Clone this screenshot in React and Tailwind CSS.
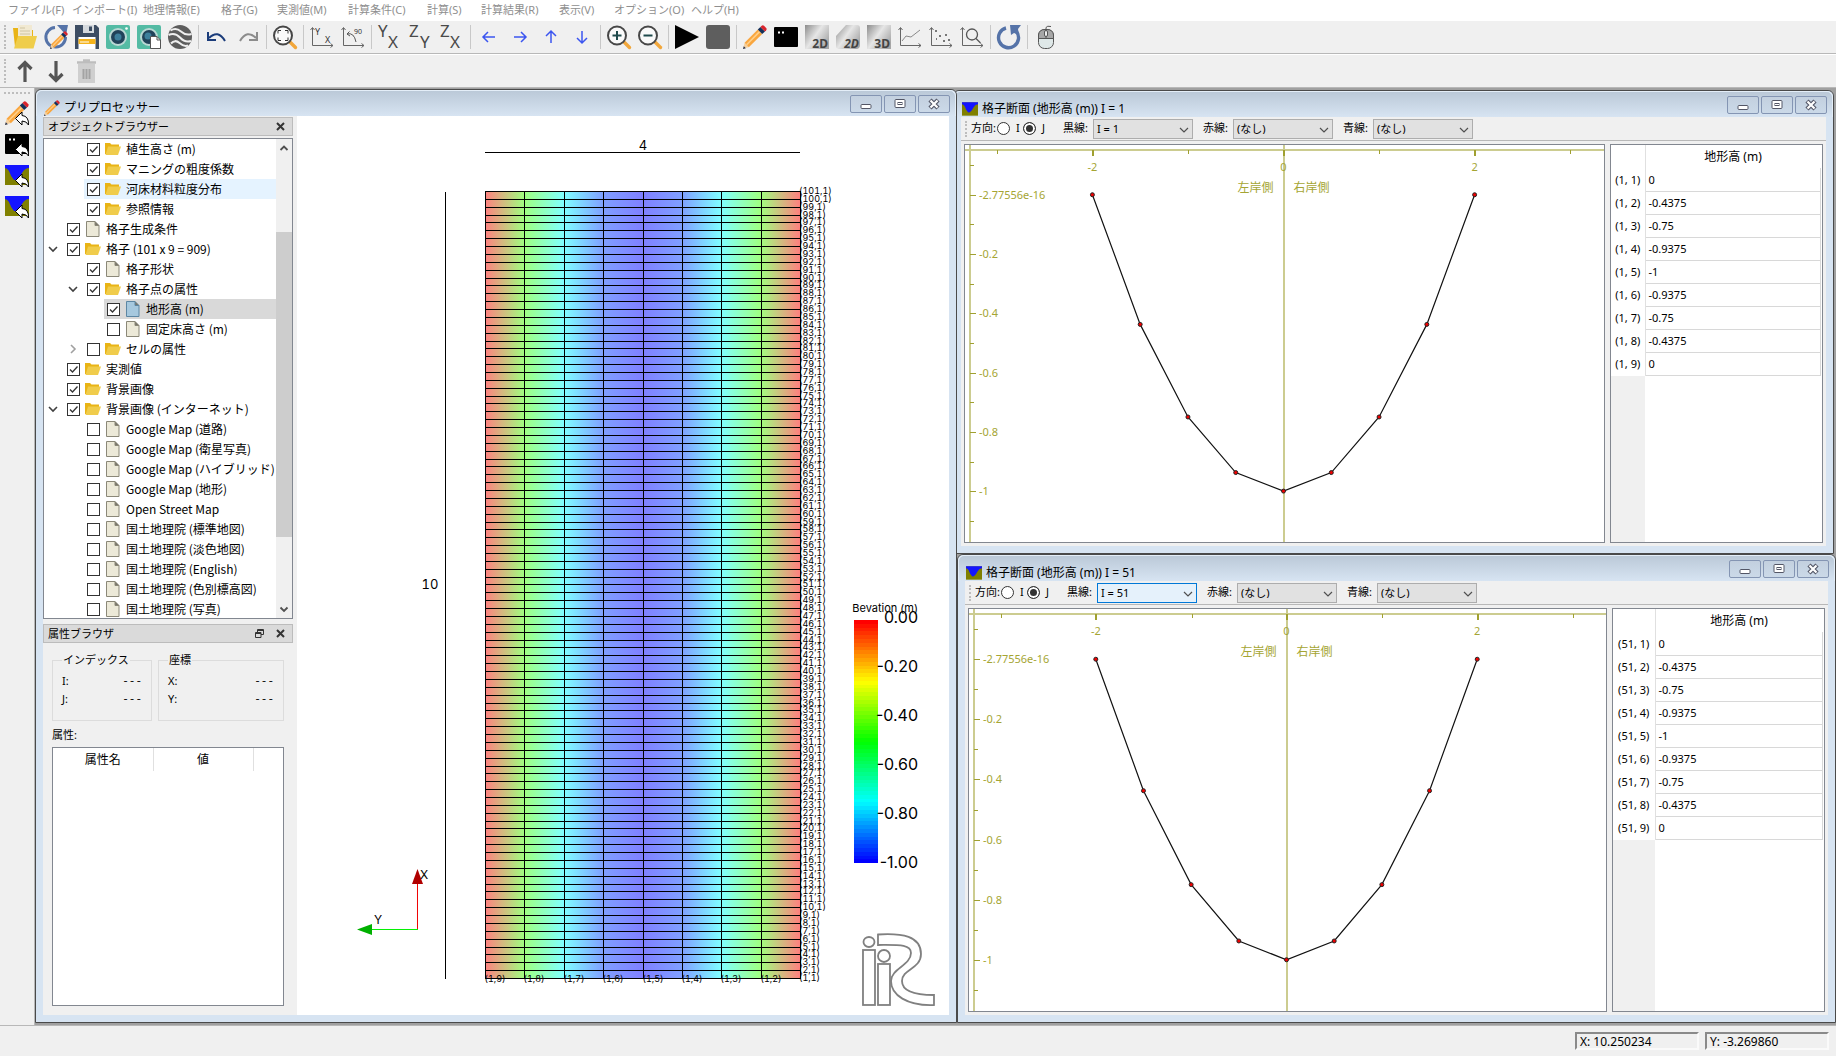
import { useState } from 'react'

const COLS = [0, -0.4375, -0.75, -0.9375, -1, -0.9375, -0.75, -0.4375, 0]

const MENU = [
  ['ファイル(F)', 'w-[64px]'],
  ['インポート(I)', 'w-[71px]'],
  ['地理情報(E)', 'w-[78px]'],
  ['格子(G)', 'w-[56px]'],
  ['実測値(M)', 'w-[71px]'],
  ['計算条件(C)', 'w-[79px]'],
  ['計算(S)', 'w-[54px]'],
  ['計算結果(R)', 'w-[78px]'],
  ['表示(V)', 'w-[55px]'],
  ['オプション(O)', 'w-[77px]'],
  ['ヘルプ(H)', 'w-[64px]'],
]

// level, icon, label, checked, expander, row state
const TREE = [
  [2, 'folder', '植生高さ (m)', true],
  [2, 'folder', 'マニングの粗度係数', true],
  [2, 'folder', '河床材料粒度分布', true, null, 'hover'],
  [2, 'folder', '参照情報', true],
  [1, 'file', '格子生成条件', true],
  [1, 'folder', '格子 (101 x 9 = 909)', true, 'open'],
  [2, 'file', '格子形状', true],
  [2, 'folder', '格子点の属性', true, 'open'],
  [3, 'active', '地形高 (m)', true, null, 'selected'],
  [3, 'file', '固定床高さ (m)', false],
  [2, 'folder', 'セルの属性', false, 'closed'],
  [1, 'folder', '実測値', true],
  [1, 'folder', '背景画像', true],
  [1, 'folder', '背景画像 (インターネット)', true, 'open'],
  [2, 'file', 'Google Map (道路)', false],
  [2, 'file', 'Google Map (衛星写真)', false],
  [2, 'file', 'Google Map (ハイブリッド)', false],
  [2, 'file', 'Google Map (地形)', false],
  [2, 'file', 'Open Street Map', false],
  [2, 'file', '国土地理院 (標準地図)', false],
  [2, 'file', '国土地理院 (淡色地図)', false],
  [2, 'file', '国土地理院 (English)', false],
  [2, 'file', '国土地理院 (色別標高図)', false],
  [2, 'file', '国土地理院 (写真)', false],
]

const INDENT = { 1: 'w-0', 2: 'w-5', 3: 'w-10' }
const ROW_BG = { hover: 'bg-[#e5f3ff]', selected: 'bg-[#d9d9d9]' }

/* ---------- icons ---------- */

function Svg({ children, className = 'h-6 w-6' }) {
  return <svg viewBox="0 0 24 24" className={`${className} shrink-0 overflow-visible`} fill="none" aria-hidden="true">{children}</svg>
}

function Pencil() {
  return (
    <>
      <path d="M0 24 1.6 17.8 5.8 22Z" fill="#f4d0a0" />
      <path d="M0 24 .8 21.2 2.8 23.2Z" fill="#1f2d4d" />
      <path d="M1.6 17.8 14.8 4.6 19.2 9 5.8 22.3Z" fill="#f9a63f" />
      <path d="M3.6 19.8 16.6 6.6" stroke="#ffd08a" strokeWidth="1.6" />
      <path d="M14.8 4.6 17.4 2 22 6.4 19.2 9Z" fill="#14305a" />
      <path d="M17.4 2 19 .6Q20 0 21 .8L23.4 3.2Q24 4.2 23.2 5.2L22 6.4Z" fill="#d9242c" />
    </>
  )
}

function Magnifier({ children }) {
  return (
    <>
      <path d="M16.5 16.5 22.5 22.5" stroke="#f2a73b" strokeWidth="3.4" strokeLinecap="round" />
      <circle cx="10" cy="10.5" r="9" fill="#fafafa" stroke="#474747" strokeWidth="2" />
      {children}
    </>
  )
}

function Axes({ children }) {
  return (
    <>
      <path d="M2.5 3V20.500H23M.5 5 2.500 2.500 4.500 5M20.500 18.500 23 20.500 20.500 22.500" stroke="#666" />
      {children}
    </>
  )
}

function BadgeTile({ label, round, italic }) {
  return (
    <>
      <defs>
        <linearGradient id={`tile-${label}${italic ? 'i' : ''}`} x1="0" y1="0" x2="1" y2=".7">
          <stop offset="0" stopColor="#8c8c8c" />
          <stop offset=".5" stopColor="#e6e6e6" />
          <stop offset="1" stopColor="#a6a6a6" />
        </linearGradient>
      </defs>
      <path
        d={round ? 'M10 0H21Q24 0 24 3V20Q24 24 20 24H3Q0 24 0 21V11Z' : 'M0 0H24V24H0Z'}
        fill={`url(#tile-${label}${italic ? 'i' : ''})`}
      />
      <text x="23" y="23" fontSize="12" fontWeight="700" fontStyle={italic ? 'italic' : 'normal'} textAnchor="end" fill="#444">{label}</text>
    </>
  )
}

function ReplyArrow() {
  return <path d="M10.500 17.500 17 11V14.500Q24 15 23.500 24 21.500 20 17 20V24Z" fill="#fff" stroke="#000" />
}

function Section({ arrow }) {
  return (
    <>
      <path d="M0 2H24V22H0Z" fill="#808000" />
      <path d="M0 2H24V5Q20 5 17 10 13 18 9 17 6 14 4 8 2 5 0 5Z" fill="#1414ff" />
      {arrow && <ReplyArrow />}
    </>
  )
}

const ICONS = {
  open: (
    <>
      <path d="M0 3H7L9 5H20V22H2Z" fill="#e9b416" />
      <path d="M5 0H19V13H5Z" fill="#f1e9d2" />
      <path d="M7 3H12M7 6H17M7 9H17" stroke="#cfc4a2" />
      <path d="M5 11H24L20.500 23.500H1Z" fill="#efcd4a" />
    </>
  ),
  reload: (
    <>
      <path d="M11 2.500A9.800 9.800 0 1 0 21.500 12" stroke="#5573a8" strokeWidth="3" />
      <path d="M13 0H24L22 10Z" fill="#5573a8" />
      <g transform="translate(6 6) scale(.75)"><Pencil /></g>
    </>
  ),
  save: (
    <>
      <path d="M0 0H21L24 3V24H0Z" fill="#3d4d63" />
      <path d="M8 0H19V8H8Z" fill="#d5d9dd" />
      <path d="M14 1.500H17V6H14Z" fill="#3d4d63" />
      <path d="M3.500 12H20.500V24H3.500Z" fill="#fff" />
      <path d="M3.500 14H20.500V19H3.500Z" fill="#f5b31b" />
      <path d="M5 17H14" stroke="#fff" />
    </>
  ),
  camera: (
    <>
      <rect width="24" height="24" rx="2" fill="#54bba4" />
      <circle cx="12" cy="12" r="9" fill="#b9d8d4" />
      <circle cx="12" cy="12" r="7" fill="#21435a" />
      <circle cx="12" cy="12" r="3.500" fill="#3d7f9c" />
      <circle cx="20.500" cy="3.500" r="1.300" fill="#fff" />
    </>
  ),
  cameraPage: (
    <>
      <rect width="24" height="24" rx="2" fill="#54bba4" />
      <circle cx="12" cy="12" r="9" fill="#b9d8d4" />
      <circle cx="12" cy="12" r="7" fill="#21435a" />
      <circle cx="11" cy="11" r="3.500" fill="#3d7f9c" />
      <path d="M13.500 11.500H20L23.500 15V23.500H13.500Z" fill="#fff" stroke="#555" />
      <path d="M20 11.500V15H23.500" stroke="#555" />
    </>
  ),
  earth: (
    <>
      <circle cx="12" cy="12" r="12" fill="#5d5d5d" />
      <path d="M2.500 5.500Q8 2 13 6.500T23.500 9M.5 10Q7 7 12 12.500T23 16M3 18.500Q7 14 11.500 18T20 20.500" stroke="#efefef" strokeWidth="2" />
    </>
  ),
  undo: (
    <>
      <path d="M4 13Q13 4 20 16" stroke="#1b3c7a" strokeWidth="2" />
      <path d="M3 7V15H11" stroke="#1b3c7a" strokeWidth="2" />
    </>
  ),
  redo: (
    <>
      <path d="M20 13Q11 4 4 16" stroke="#8c8c8c" strokeWidth="2" />
      <path d="M21 7V15H13" stroke="#8c8c8c" strokeWidth="2" />
    </>
  ),
  fit: (
    <Magnifier>
      <path d="M5 8.500V5.500H8M12 5.500H15V8.500M15 12.500V15.500H12M8 15.500H5V12.500" stroke="#333" />
    </Magnifier>
  ),
  axisXY: (
    <Axes>
      <text x="5" y="10" fontSize="9" fill="#333">Y</text>
      <text x="15" y="18" fontSize="9" fill="#333">X</text>
    </Axes>
  ),
  rotate: (
    <Axes>
      <path d="M6 9Q13 7 15 17M8.500 6.500 6 9 9 11" stroke="#555" />
      <text x="13" y="9" fontSize="7" fill="#333">90</text>
    </Axes>
  ),
  yx: (
    <g fill="#4a4a4a" fontSize="17">
      <text x="0" y="12">Y</text>
      <text x="10" y="23">X</text>
    </g>
  ),
  zy: (
    <g fill="#4a4a4a" fontSize="17">
      <text x="0" y="12">Z</text>
      <text x="11" y="23">Y</text>
    </g>
  ),
  zx: (
    <g fill="#4a4a4a" fontSize="17">
      <text x="0" y="12">Z</text>
      <text x="10" y="23">X</text>
    </g>
  ),
  left: <path d="M18 12H6M11 7 6 12 11 17" stroke="#3b55f0" strokeWidth="1.500" />,
  right: <path d="M6 12H18M13 7 18 12 13 17" stroke="#3b55f0" strokeWidth="1.500" />,
  up: <path d="M12 18V6M7 11 12 6 17 11" stroke="#3b55f0" strokeWidth="1.500" />,
  down: <path d="M12 6V18M7 13 12 18 17 13" stroke="#3b55f0" strokeWidth="1.500" />,
  zoomIn: <Magnifier><path d="M10 6V15M5.500 10.500H14.500" stroke="#1f4a4c" strokeWidth="2" /></Magnifier>,
  zoomOut: <Magnifier><path d="M5.500 10.500H14.500" stroke="#1f4a4c" strokeWidth="2" /></Magnifier>,
  play: <path d="M0 0 24 12 0 24Z" fill="#000" />,
  stop: <rect width="24" height="24" rx="3" fill="#5e5e5e" />,
  pencil: <Pencil />,
  console: (
    <>
      <rect y="2" width="24" height="20" rx="1" fill="#000" />
      <path d="M4 7.500H6M8 7.500H10" stroke="#fff" strokeWidth="2" />
    </>
  ),
  post2d: <BadgeTile label="2D" />,
  post2dBird: <BadgeTile label="2D" round italic />,
  post3d: <BadgeTile label="3D" />,
  lineChart: <Axes><path d="M4 16 8 11 13 12 22 5" stroke="#8a8a8a" /></Axes>,
  scatter: (
    <Axes>
      <path d="M6 6H8M10 11H12M7 14H8M16 10H18M14 16H16M19 15H21" stroke="#777" strokeWidth="2" />
    </Axes>
  ),
  chartSearch: (
    <Axes>
      <circle cx="12" cy="9.500" r="5.500" stroke="#555" strokeWidth="1.300" />
      <path d="M16 13.500 20.500 18" stroke="#555" strokeWidth="1.300" />
    </Axes>
  ),
  refresh: (
    <>
      <path d="M9 3A10 10 0 1 0 19 6" stroke="#5573a8" strokeWidth="3.400" />
      <path d="M13 0H24L21 4 22 10 17 8 14 10Z" fill="#5573a8" />
    </>
  ),
  mouse: (
    <>
      <path d="M12 5V2.500Q13 .5 17 1.500" stroke="#555" />
      <rect x="4.500" y="4.500" width="15" height="19" rx="6" fill="#dfe8e8" stroke="#555" />
      <path d="M4.500 13.500V10Q5 4.500 11 4.500H13Q19 4.500 19.500 10V13.500Z" fill="#a6a6a6" stroke="#555" />
      <path d="M12 4.500V13.500" stroke="#555" />
      <rect x="10.500" y="5.500" width="3" height="6" rx="1.500" fill="#eee" stroke="#555" />
    </>
  ),
  moveUp: <path d="M12 23V4M5.500 10 12 3.500 18.500 10" stroke="#555" strokeWidth="3.200" />,
  moveDown: <path d="M12 2V21M5.500 15 12 21.500 18.500 15" stroke="#555" strokeWidth="3.200" />,
  trash: (
    <>
      <path d="M3 5H20V24H3Z" fill="#cfcfcf" />
      <path d="M2 3.500H21M8 1.500H15" stroke="#bdbdbd" strokeWidth="2.500" />
      <path d="M8.500 10V20M11.500 10V20M14.500 10V20" stroke="#a3a3a3" strokeWidth="2" />
    </>
  ),
  pencilBack: <><Pencil /><ReplyArrow /></>,
  consoleBack: (
    <>
      <rect y="2" width="24" height="20" rx="1" fill="#000" />
      <path d="M4 7.500H6M8 7.500H10" stroke="#fff" strokeWidth="2" />
      <ReplyArrow />
    </>
  ),
  sectionBack: <Section arrow />,
}

const MAIN_TOOLS = [
  ['open', '開く'], ['reload', '再読み込み'], ['save', '保存'], ['camera', 'スナップショット'], ['cameraPage', 'コピー'], ['earth', 'Google Earth'],
  null, ['undo', '元に戻す'], ['redo', 'やり直し'],
  null, ['fit', '全体表示'],
  null, ['axisXY', '方向リセット'], ['rotate', '90度回転'],
  null, ['yx', 'XY平面'], ['zy', 'YZ平面'], ['zx', 'XZ平面'],
  null, ['left', '左'], ['right', '右'], ['up', '上'], ['down', '下'],
  null, ['zoomIn', '拡大'], ['zoomOut', '縮小'],
  null, ['play', '実行'], ['stop', '停止'],
  null, ['pencil', 'プリプロセッサー'], ['console', 'コンソール'], ['post2d', '2D'], ['post2dBird', '2D 鳥瞰'], ['post3d', '3D'],
  ['lineChart', 'グラフ'], ['scatter', '散布図'], ['chartSearch', '検証'],
  null, ['refresh', '更新'],
  null, ['mouse', 'マウス'],
]

const EDIT_TOOLS = [['moveUp', '上へ'], ['moveDown', '下へ'], ['trash', '削除']]

const WINDOW_TOOLS = [['pencilBack', 'プリプロセッサー'], ['consoleBack', 'コンソール'], ['sectionBack', '格子断面 I = 1'], ['sectionBack', '格子断面 I = 51']]

/* ---------- shared pieces ---------- */

function Toolbar({ items }) {
  return (
    <div className="flex h-[34px] shrink-0 items-center border-y border-t-white border-b-[#b8b8b8] bg-[#f0f0f0]">
      <div className="w-[9px] shrink-0 pl-1"><div className="h-6 w-0 border-l-2 border-dotted border-[#bdbdbd]" /></div>
      {items.map((item, i) => item
        ? (
          <button key={i} aria-label={item[1]} className="flex h-8 w-[31px] shrink-0 items-center pl-1">
            <Svg>{ICONS[item[0]]}</Svg>
          </button>
        )
        : <div key={i} className="flex w-[6px] shrink-0 justify-center"><div className="h-6 w-px bg-[#c8c8c8]" /></div>
      )}
    </div>
  )
}

function WindowButton({ label, children }) {
  return (
    <button aria-label={label} className="flex h-[18px] w-8 items-center justify-center rounded-[2px] border border-[#8495b3] bg-linear-to-b from-[#c3d0df] to-[#cbd9e8]">
      <svg width="12" height="12" viewBox="0 0 12 12" fill="none" stroke="#535666" aria-hidden="true">{children}</svg>
    </button>
  )
}

function MdiWindow({ title, icon, className, children }) {
  return (
    <section className={`flex min-h-0 flex-col rounded-t-md border border-[#4a4a4a] bg-[#d7e4f2] ${className}`}>
      <header className="flex h-[26px] shrink-0 justify-between rounded-t-md border-x border-t border-[#e4eef8] bg-linear-to-b from-[#bbc9d8] to-[#d7e4f2] pr-[5px] pl-[7px]">
        <div className="flex items-end gap-1">
          <Svg className="h-4 w-4">{icon}</Svg>
          <h2 className="text-xs leading-4">{title}</h2>
        </div>
        <div className="flex gap-[2px] pt-1">
          <WindowButton label="最小化"><rect x="1" y="6.500" width="10" height="4" rx="1" fill="#fff" /></WindowButton>
          <WindowButton label="元に戻す"><rect x="1" y="1.500" width="10" height="8" rx="1" fill="#fff" /><rect x="4" y="4.500" width="4" height="2" /></WindowButton>
          <WindowButton label="閉じる">
            <path d="M2 2 10 10M10 2 2 10" strokeWidth="4.500" />
            <path d="M2.500 2.500 9.500 9.500M9.500 2.500 2.500 9.500" stroke="#fff" strokeWidth="2.200" />
          </WindowButton>
        </div>
      </header>
      <div className="flex min-h-0 flex-1 px-[7px] pb-[7px]">{children}</div>
    </section>
  )
}

function DockTitle({ title, floating }) {
  return (
    <div className="flex h-[19px] shrink-0 items-center justify-between border border-[#bcbcbc] bg-[#dadada] pr-[7px] pl-1">
      <h3 className="text-[11px] leading-4">{title}</h3>
      <div className="flex gap-3">
        {floating && (
          <button aria-label="フロート">
            <svg width="9" height="9" viewBox="0 0 9 9" fill="none" stroke="#333" aria-hidden="true"><path d="M2.500 3V.5H8.500V5.500H6M.5 3.500H6V8.500H.5ZM2.500 1.500H8.500M.5 4.500H6" /></svg>
          </button>
        )}
        <button aria-label="閉じる">
          <svg width="9" height="9" viewBox="0 0 9 9" fill="none" stroke="#333" strokeWidth="2" aria-hidden="true"><path d="M1 1 8 8M8 1 1 8" /></svg>
        </button>
      </div>
    </div>
  )
}

/* ---------- object browser ---------- */

function TreeIcon({ type }) {
  if (type === 'folder') {
    return (
      <svg width="16" height="16" viewBox="0 0 16 16" className="shrink-0" aria-hidden="true">
        <path d="M0 2H5L6.500 3.500H14V7L1 13H0Z" fill="#e9b416" />
        <path d="M3 5.500H16L13 14H.5Z" fill="#f0cc4b" />
      </svg>
    )
  }
  const active = type === 'active'
  return (
    <svg width="16" height="16" viewBox="0 0 16 16" className="shrink-0" fill={active ? '#a6c8de' : '#ece9d8'} stroke={active ? '#5c86a3' : '#8b8878'} aria-hidden="true">
      <path d="M1.500 .5H10L14 4.500V15.500H1.500Z" />
      <path d="M10 .5V4.500H14" fill="#77756a" />
    </svg>
  )
}

function TreeRow({ row }) {
  const [level, icon, label, initial, expander, state] = row
  const [checked, setChecked] = useState(initial)

  return (
    <li className="flex h-5 shrink-0">
      <span className={`${INDENT[level]} shrink-0`} />
      <span className="flex w-5 shrink-0 items-center justify-center pr-[2px]">
        {expander && (
          <svg width="10" height="10" viewBox="0 0 10 10" fill="none" stroke={expander === 'open' ? '#404040' : '#a0a0a0'} strokeWidth="1.600" aria-hidden="true">
            <path d={expander === 'open' ? 'M1 3 5 7 9 3' : 'M3 1 7 5 3 9'} />
          </svg>
        )}
      </span>
      <label className={`flex min-w-0 flex-1 items-center gap-[5px] pl-[3px] text-xs whitespace-nowrap [font-family:'Noto_Sans_CJK_JP',sans-serif] ${ROW_BG[state] || ''}`}>
        <span className="relative h-[13px] w-[13px] shrink-0">
          <input type="checkbox" checked={checked} onChange={e => setChecked(e.target.checked)} className="peer block h-[13px] w-[13px] appearance-none border border-[#333] bg-white" />
          <svg viewBox="0 0 13 13" className="pointer-events-none absolute inset-0 hidden peer-checked:block" fill="none" stroke="#333" strokeWidth="1.300" aria-hidden="true"><path d="M3 6.500 5.500 9 10.500 3.500" /></svg>
        </span>
        <TreeIcon type={icon} />
        <span>{label}</span>
      </label>
    </li>
  )
}

function ObjectBrowser() {
  return (
    <div className="mt-[2px] flex h-[481px] shrink-0 overflow-hidden border border-[#828790] bg-white">
      <ul className="flex min-w-0 flex-1 flex-col overflow-hidden">
        {TREE.map(row => <TreeRow key={row[2]} row={row} />)}
      </ul>
      <div className="flex w-4 shrink-0 flex-col bg-[#f0f0f0]">
        <svg viewBox="0 0 16 17" className="h-[17px] w-4" fill="none" stroke="#505050" strokeWidth="1.800" aria-hidden="true"><path d="M4.500 11 8 7.500 11.500 11" /></svg>
        <div className="mt-[76px] h-[305px] bg-[#cdcdcd]" />
        <svg viewBox="0 0 16 17" className="mt-auto h-[17px] w-4" fill="none" stroke="#505050" strokeWidth="1.800" aria-hidden="true"><path d="M4.500 6.500 8 10 11.500 6.500" /></svg>
      </div>
    </div>
  )
}

/* ---------- attribute browser ---------- */

function ValueGroup({ title, names, className }) {
  return (
    <fieldset className={`h-[69px] border border-[#dcdcdc] px-[9px] ${className}`}>
      <legend className="px-px text-[11px] leading-4">{title}</legend>
      <dl className="pt-1">
        {names.map(n => (
          <div key={n} className="flex h-[18px] items-center justify-between text-[11px]">
            <dt>{n}:</dt>
            <dd className="[font-family:'Liberation_Mono',monospace]">---</dd>
          </div>
        ))}
      </dl>
    </fieldset>
  )
}

function AttributeBrowser() {
  return (
    <div className="flex min-h-0 flex-1 flex-col px-[9px] pt-[9px] pb-[9px]">
      <div className="flex gap-[6px]">
        <ValueGroup title="インデックス" names={['I', 'J']} className="w-[100px]" />
        <ValueGroup title="座標" names={['X', 'Y']} className="flex-1" />
      </div>
      <p className="pt-[6px] pb-1 text-[11px] leading-4">属性:</p>
      <div className="min-h-0 flex-1 border border-[#828790] bg-white">
        <table className="w-full table-fixed text-xs">
          <thead>
            <tr className="h-[23px]">
              <th className="w-[100px] border-r border-[#e0e0e0] font-normal">属性名</th>
              <th className="w-[100px] border-r border-[#e0e0e0] font-normal">値</th>
              <th />
            </tr>
          </thead>
        </table>
      </div>
    </div>
  )
}

/* ---------- grid view ---------- */

const GRID = { left: 188, right: 503, top: 75, bottom: 862 }

// blue (-1) .. red (0)
function hue(value) {
  return Math.round(-value * 240)
}

function GridView() {
  const colX = i => GRID.left + Math.round((i * (GRID.right - GRID.left)) / 8) + 0.5
  const rowY = j => GRID.bottom - Math.round(((j - 1) * (GRID.bottom - GRID.top)) / 100) + 0.5
  const rows = Array.from({ length: 101 }, (_, k) => k + 1)

  return (
    <div className="min-w-0 flex-1 bg-white">
      <svg viewBox="0 0 652 899" className="block h-full w-full">
        <defs>
          <linearGradient id="elevation">
            {COLS.map((v, i) => <stop key={i} offset={i / 8} stopColor={`hsl(${hue(v)} 100% 75%)`} />)}
          </linearGradient>
        </defs>

        {/* Grid */}
        <rect x={GRID.left} y={GRID.top} width={GRID.right - GRID.left} height={GRID.bottom - GRID.top} fill="url(#elevation)" />
        <g stroke="#000" shapeRendering="crispEdges">
          {rows.map(j => <path key={j} d={`M${GRID.left} ${rowY(j)}H${GRID.right + 1}`} />)}
          {COLS.map((_, i) => <path key={i} d={`M${colX(i)} ${GRID.top}V${GRID.bottom + 1}`} />)}
          <path d="M188 36.500H503M148.500 76V863" />
        </g>
        <g className="tabular-nums [font-family:Inter,sans-serif]">
          <text x="346" y="34" fontSize="13" textAnchor="middle">4</text>
          <text x="133" y="473" fontSize="13" textAnchor="middle">10</text>
          <g fontSize="9">
            {rows.map(j => <text key={j} x="502" y={rowY(j) + 3}>({j},1)</text>)}
            {COLS.slice(1).map((_, i) => <text key={i} x={colX(i) - 1} y="866">(1,{9 - i})</text>)}
          </g>
        </g>

        {/* Axes */}
        <path d="M120.500 767V813" stroke="#f00000" />
        <path d="M74 813.500H121" stroke="#00f000" />
        <path d="M120.500 753 126 768H115Z" fill="#b00000" />
        <path d="M60 813.500 75 808V819Z" fill="#00b000" />
        <g className="[font-family:Inter,sans-serif]" fontSize="12">
          <text x="127" y="763" textAnchor="middle">X</text>
          <text x="81" y="808" textAnchor="middle">Y</text>
        </g>

        {/* Color legend */}
        <g shapeRendering="crispEdges">
          {Array.from({ length: 64 }, (_, i) => (
            <rect key={i} x="557" y={504 + Math.round(i * 3.8)} width="24" height="4" fill={`hsl(${(i * 240) / 63} 100% 50%)`} />
          ))}
        </g>
        <g className="[font-family:Inter,sans-serif]" textAnchor="end">
          <text x="621" y="496" fontSize="11">Bevation (m)</text>
          {['0.00', '-0.20', '-0.40', '-0.60', '-0.80', '-1.00'].map((t, i) => (
            <text key={t} x="621" y={507 + i * 49} fontSize="16">{t}</text>
          ))}
        </g>

        {/* Logo */}
        <g transform="translate(565 817)" fill="#fff" stroke="#808080" strokeWidth="1.800">
          <ellipse cx="7" cy="9" rx="5.500" ry="5" />
          <rect x="1" y="17" width="12" height="55" />
          <ellipse cx="22" cy="23" rx="6" ry="6" />
          <rect x="16" y="31" width="12" height="41" />
          <path d="M16 1.500C40 0 59 3 59 21C59 36 40 36 40 48C40 58 52 62 72 62V72C45 73 29 62 29 48C29 36 49 32 49 20C49 11 36 12 16 12Z" />
        </g>
      </svg>
    </div>
  )
}

/* ---------- cross section ---------- */

function LineSelect({ id, label, options, focused }) {
  return (
    <div className="mr-[10px] flex items-center">
      <label htmlFor={id} className="w-[30px] text-[11px] whitespace-nowrap">{label}:</label>
      <div className="relative">
        <select
          id={id}
          className={`block h-5 w-[100px] appearance-none border pl-[3px] text-[11px] leading-none outline-none ${focused ? 'border-[#0078d7] bg-[#e5f1fb]' : 'border-[#adadad] bg-[#e1e1e1]'}`}
        >
          {options.map(o => <option key={o}>{o}</option>)}
        </select>
        <svg viewBox="0 0 10 10" className="pointer-events-none absolute top-[6px] right-1 h-[10px] w-[10px]" fill="none" stroke="#505050" strokeWidth="1.200" aria-hidden="true"><path d="M1 3 5 7 9 3" /></svg>
      </div>
    </div>
  )
}

function SectionChart({ width, height, centerX, unitX, zeroY, unitY }) {
  const x = v => centerX + v * unitX
  const y = v => zeroY - v * unitY
  const points = COLS.map((v, i) => [x(-2 + i * 0.5), y(v)])

  return (
    <div className="min-w-0 flex-1 border border-[#828790] bg-white">
      <svg viewBox={`0 0 ${width} ${height}`} className="block h-full w-full">
        <g stroke="#cccc90" strokeWidth="2" shapeRendering="crispEdges">
          <path d={`M0 5H${width}M5 0V${height}M${centerX} 0V${height}`} />
        </g>
        <g stroke="#a0a030" shapeRendering="crispEdges">
          {[-3, -2, -1, 0, 1, 2, 3].map(v => (
            <path key={v} d={`M${Math.round(x(v)) + 0.5} 5v${v % 2 ? 4 : 6}`} strokeWidth={v % 2 ? 1 : 2} />
          ))}
          {Array.from({ length: 13 }, (_, i) => (
            <path key={i} d={`M5 ${Math.round(y(0.1 - i * 0.1)) + 0.5}h${i % 2 ? 6 : 4}`} />
          ))}
        </g>
        <g fill="#a5a533" fontSize="11">
          {[-2, 0, 2].map(v => <text key={v} x={x(v)} y="26" textAnchor="middle">{v}</text>)}
          <text x="14" y={y(0) + 4}>-2.77556e-16</text>
          {[-0.2, -0.4, -0.6, -0.8, -1].map(v => <text key={v} x="14" y={y(v) + 4}>{v}</text>)}
          <text x={centerX - 10} y="47" fontSize="12" textAnchor="end">左岸側</text>
          <text x={centerX + 10} y="47" fontSize="12">右岸側</text>
        </g>
        <polyline points={points.map(p => p.join()).join(' ')} fill="none" stroke="#111" strokeWidth="1.200" />
        {points.map(p => <circle key={p[0]} cx={p[0]} cy={p[1]} r="2" fill="#f00000" stroke="#222" />)}
      </svg>
    </div>
  )
}

function SectionTable({ index, headWidth }) {
  return (
    <div className="flex w-[213px] shrink-0 flex-col border border-[#828790] bg-white pr-px">
      <table className="w-full table-fixed text-[11px]">
        <thead>
          <tr className="h-[23px]">
            <th className={`${headWidth} border-r border-[#e0e0e0]`} />
            <th className="text-xs font-normal">地形高 (m)</th>
          </tr>
        </thead>
        <tbody>
          {COLS.map((v, i) => (
            <tr key={i} className="h-[23px]">
              <th className="border-r border-[#e0e0e0] px-0 pt-px pb-0 font-normal whitespace-nowrap">({index}, {i + 1})</th>
              <td className="border-r border-b border-[#d8d8d8] pt-px pr-0 pb-0 pl-[3px]">{v}</td>
            </tr>
          ))}
        </tbody>
      </table>
      <div className={`${headWidth} flex-1 bg-[#f0f0f0]`} />
    </div>
  )
}

function SectionWindow({ index, focused, headWidth, chart, className }) {
  const [direction, setDirection] = useState('J')

  return (
    <MdiWindow title={`格子断面 (地形高 (m)) I = ${index}`} icon={<Section />} className={className}>
      <div className="flex min-w-0 flex-1 flex-col bg-[#f0f0f0]">
        <div className="flex h-6 shrink-0 items-center border-b border-[#b8b8b8]">
          <div className="w-[10px] shrink-0 pl-1"><div className="h-4 border-l-2 border-dotted border-[#bdbdbd]" /></div>
          <span className="w-[26px] text-[11px] whitespace-nowrap">方向:</span>
          {['I', 'J'].map(d => (
            <label key={d} className={`flex items-center gap-[6px] text-[11px] ${d === 'I' ? 'w-[26px]' : 'w-10'}`}>
              <input
                type="radio"
                name={`direction-${index}`}
                checked={direction === d}
                onChange={() => setDirection(d)}
                className="h-[13px] w-[13px] appearance-none rounded-full border border-[#333] bg-white checked:bg-[#333] checked:shadow-[inset_0_0_0_2px_#fff]"
              />
              {d}
            </label>
          ))}
          <LineSelect id={`black-${index}`} label="黒線" options={[`I = ${index}`]} focused={focused} />
          <LineSelect id={`red-${index}`} label="赤線" options={['(なし)']} />
          <LineSelect id={`blue-${index}`} label="青線" options={['(なし)']} />
        </div>
        <div className="flex min-h-0 flex-1 gap-[5px] p-[3px]">
          <SectionChart {...chart} />
          <SectionTable index={index} headWidth={headWidth} />
        </div>
      </div>
    </MdiWindow>
  )
}

/* ---------- app ---------- */

export default function App() {
  return (
    <div className="flex h-screen flex-col overflow-hidden bg-[#f0f0f0] text-black [font-family:'Noto_Sans','Noto_Sans_CJK_JP',sans-serif]">
      <nav className="flex h-5 shrink-0 items-center bg-white pl-2 text-[11px] text-[#8f8f8f]">
        {MENU.map(([label, width]) => (
          <button key={label} className={`${width} shrink-0 text-left whitespace-nowrap`}>{label}</button>
        ))}
      </nav>
      <Toolbar items={MAIN_TOOLS} />
      <Toolbar items={EDIT_TOOLS} />

      <main className="flex min-h-0 flex-1">
        <aside className="flex w-[35px] shrink-0 flex-col border-r border-[#b8b8b8]">
          <div className="h-[10px] px-1 pt-1"><div className="border-t-2 border-dotted border-[#bdbdbd]" /></div>
          {WINDOW_TOOLS.map(([icon, label]) => (
            <button key={label} aria-label={label} className="flex h-[31px] items-start pt-[3px] pl-[5px]">
              <Svg>{ICONS[icon]}</Svg>
            </button>
          ))}
        </aside>

        <div className="flex min-w-0 flex-1 bg-[#a0a0a0] pt-px pb-[2px]">
          <MdiWindow title="プリプロセッサー" icon={<Pencil />} className="relative z-10 min-w-0 flex-[921]">
            <div className="flex min-w-0 flex-1 bg-[#f0f0f0]">
              <div className="mr-1 flex w-[250px] shrink-0 flex-col pt-px">
                <DockTitle title="オブジェクトブラウザー" />
                <ObjectBrowser />
                <div className="h-[5px] shrink-0" />
                <DockTitle title="属性ブラウザ" floating />
                <AttributeBrowser />
              </div>
              <GridView />
            </div>
          </MdiWindow>

          <div className="flex min-w-0 flex-[880] flex-col pt-px">
            <SectionWindow
              index={1}
              headWidth="w-[34px]"
              className="mr-[2px] -ml-1 flex-[464]"
              chart={{ width: 640, height: 397, centerX: 319, unitX: 95.7, zeroY: 49.5, unitY: 296.8 }}
            />
            <SectionWindow
              index={51}
              focused
              headWidth="w-[42px]"
              className="flex-[469]"
              chart={{ width: 638, height: 402, centerX: 318, unitX: 95.5, zeroY: 50, unitY: 301 }}
            />
          </div>
        </div>
      </main>

      <footer className="flex h-[31px] shrink-0 items-center justify-end gap-[6px] border-t border-[#b8b8b8] pr-[7px] text-xs">
        {['X: 10.250234', 'Y: -3.269860'].map(t => (
          <output key={t} className="block h-[18px] w-[124px] border-2 border-t-[#8a8a8a] border-r-[#fafafa] border-b-[#fafafa] border-l-[#8a8a8a] pl-[3px] leading-[15px]">{t}</output>
        ))}
      </footer>
    </div>
  )
}
